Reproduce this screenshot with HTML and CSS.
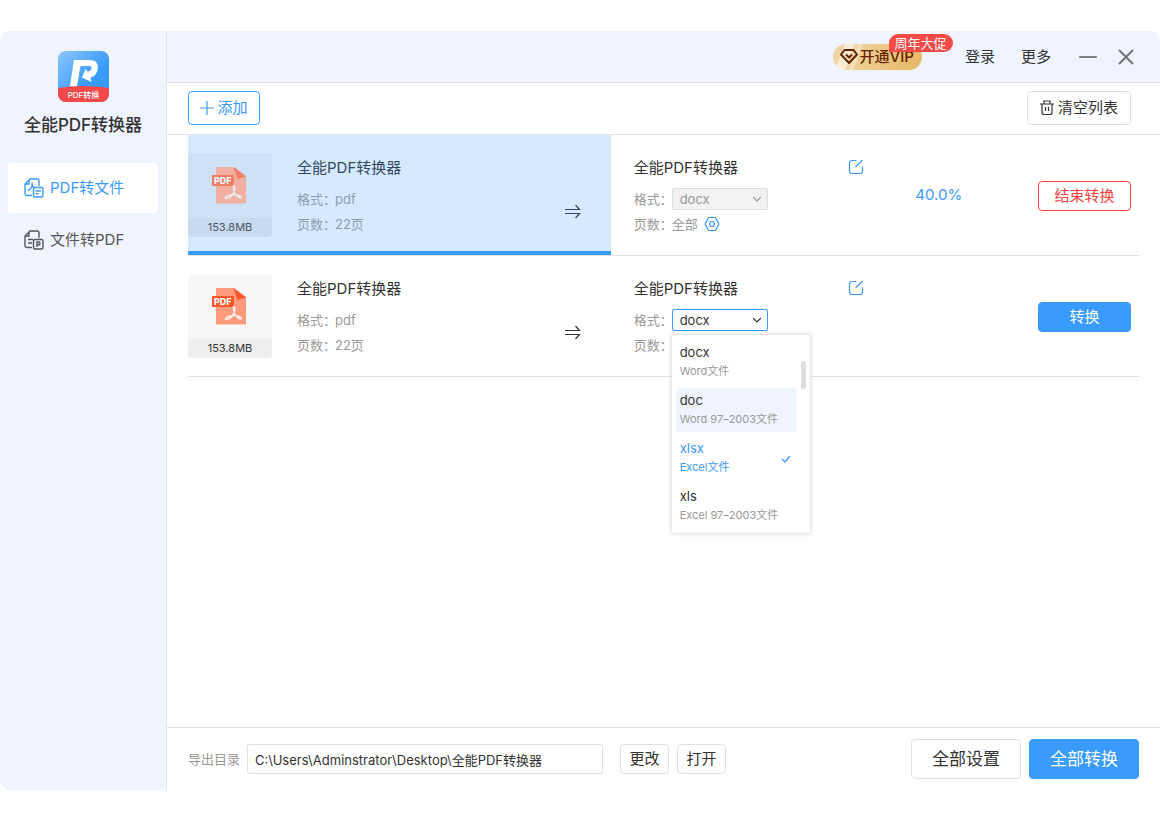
FILE: index.html
```html
<!DOCTYPE html>
<html lang="zh-CN">
<head>
<meta charset="utf-8">
<meta name="viewport" content="width=device-width, initial-scale=1">
<title>全能PDF转换器</title>
<link rel="stylesheet" href="styles.css">
</head>
<body>
<svg class="defs" aria-hidden="true">
  <symbol id="pdf-file" viewBox="0 0 37 37">
    <path d="M4 0H22L34 9V36.500H4Z" fill="#ff9a7c"/>
    <path d="M21.500 0L34 9.500L25.500 12Z" fill="#ff562a"/>
    <rect x="0" y="8" width="22" height="11" rx="0.500" fill="#ff562a"/>
    <path d="M22 18C23 20 23 23 21.500 26C20 29 17 31.500 14 31.500C12.500 31 14 29.500 16 28.800C20 27.300 25 27.300 28 29C30 30.200 29 31.500 27.500 30.800C23.500 29 21 24 21.500 18" fill="none" stroke="#f7efee" stroke-width="1.600" stroke-linejoin="round"/>
  </symbol>
  <symbol id="arrow" viewBox="0 0 17 16">
    <path d="M1 5.500H15.500L11.500 1M1 9.500H15.500L11.500 14" fill="none" stroke="currentColor" stroke-width="1.200"/>
  </symbol>
  <symbol id="edit" viewBox="0 0 16 16">
    <path d="M8.500 1.500H4A2.500 2.500 0 0 0 1.500 4V12A2.500 2.500 0 0 0 4 14.500H12A2.500 2.500 0 0 0 14.500 12V7.500M7.500 8L14.500 1" fill="none" stroke="currentColor" stroke-width="1.200"/>
  </symbol>
</svg>
<div class="window">
  <aside class="sidebar">
    <svg class="logo" viewBox="0 0 51 51" role="img" aria-label="PDF转换">
      <defs>
        <linearGradient id="logo-blue" x1="0" y1="0" x2="1" y2="1"><stop offset="0" stop-color="#8fc6ff"/><stop offset=".6" stop-color="#3a9bff"/></linearGradient>
        <clipPath id="logo-clip"><rect width="51" height="51" rx="8"/></clipPath>
      </defs>
      <g clip-path="url(#logo-clip)">
        <rect width="51" height="51" fill="url(#logo-blue)"/>
        <path d="M16 9H32C38 9 41 13 39.500 19C38.500 23.500 36 26 32.500 26.500L33.500 31L24 26.500L27.500 18L29.500 20.500C32 20.500 33.500 19 33.500 17C33.500 15.500 32.500 15 31 15H22.500L18.500 38H11.500L15 15Z" fill="#fff"/>
        <path d="M0 37Q25 33 51 37V51H0Z" fill="#f5484b"/>
      </g>
      <text x="25.500" y="47" text-anchor="middle" class="logo-text">PDF转换</text>
    </svg>
    <h1 class="app-name">全能PDF转换器</h1>
    <nav class="nav">
      <a class="nav-item is-active" href="#from-pdf">
        <svg width="20" height="20" viewBox="0 0 20 20" fill="none" stroke="currentColor" stroke-width="1.400" aria-hidden="true"><path d="M8 17.500H3A2 2 0 0 1 1 15.500V6L6 1H13A2 2 0 0 1 15 3V8M1.500 6H5V2M8 4.500C9 8 6.500 12 3.500 12.500M8 6C8 8 9.500 9.500 11 10"/><rect x="9.500" y="9.500" width="9.500" height="9.500" rx="1.500"/><path d="M11.500 13H17M11.500 15.800H14.500"/></svg>
        <span>PDF转文件</span>
      </a>
      <a class="nav-item" href="#to-pdf">
        <svg width="20" height="20" viewBox="0 0 20 20" fill="none" stroke="currentColor" stroke-width="1.400" aria-hidden="true"><path d="M8 17.500H3A2 2 0 0 1 1 15.500V6L6 1H13A2 2 0 0 1 15 3V8M1.500 6H5V2M4 9.500H9M4 13H8"/><rect x="9.500" y="9.500" width="9.500" height="9.500" rx="1.500"/><path d="M13 17V12H14.500A1.500 1.500 0 0 1 14.500 15H13"/></svg>
        <span>文件转PDF</span>
      </a>
    </nav>
  </aside>

  <main class="main">
    <header class="topbar">
      <button class="vip" type="button">
        <svg width="18" height="15" viewBox="0 0 18 15" fill="none" stroke="currentColor" stroke-width="2" stroke-linejoin="round" aria-hidden="true"><path d="M4.500 1H13.500L17 5.500L9 14L1 5.500Z"/><path d="M6 5.500L9 8.500L12 5.500"/></svg>
        <span>开通VIP</span>
        <span class="badge">周年大促</span>
      </button>
      <button class="link" type="button">登录</button>
      <button class="link" type="button">更多</button>
      <button class="win-btn" type="button" aria-label="最小化"><svg width="18" height="16" viewBox="0 0 18 16" aria-hidden="true"><path d="M1 8H17" stroke="#808080" stroke-width="2" stroke-linecap="round"/></svg></button>
      <button class="win-btn" type="button" aria-label="关闭"><svg width="16" height="16" viewBox="0 0 16 16" aria-hidden="true"><path d="M1.500 1.500L14.500 14.500M14.500 1.500L1.500 14.500" stroke="#757575" stroke-width="2" stroke-linecap="round"/></svg></button>
    </header>

    <div class="toolbar">
      <button class="btn btn-add" type="button">
        <svg width="14" height="14" viewBox="0 0 14 14" aria-hidden="true"><path d="M7 0V14M0 7H14" stroke="currentColor" stroke-width="1.200"/></svg>
        添加
      </button>
      <button class="btn btn-clear" type="button">
        <svg width="14" height="16" viewBox="0 0 14 16" fill="none" stroke="currentColor" stroke-width="1.200" aria-hidden="true"><path d="M0 4H14M4 4V1H10V4M2 4V12.500A2 2 0 0 0 4 14.500H10A2 2 0 0 0 12 12.500V4M5.500 7V11M8.500 7V11"/></svg>
        清空列表
      </button>
    </div>

    <section class="files">
      <article class="file is-running">
        <div class="source">
          <div class="thumb"><svg width="37" height="37" aria-hidden="true"><use href="#pdf-file"/><text x="2" y="17" class="pdf-tag">PDF</text></svg><span class="size">153.8MB</span></div>
          <div class="info">
            <h2 class="title">全能PDF转换器</h2>
            <p class="line format"><span class="key">格式：</span>pdf</p>
            <p class="line"><span class="key">页数：</span>22页</p>
          </div>
          <svg class="arrow" width="17" height="16" aria-hidden="true"><use href="#arrow"/></svg>
        </div>
        <div class="target">
          <div class="info">
            <div class="title-row"><h2 class="title">全能PDF转换器</h2><button class="icon-btn" type="button" aria-label="重命名"><svg width="16" height="16" aria-hidden="true"><use href="#edit"/></svg></button></div>
            <div class="line format"><label class="key" for="format-1">格式：</label><span class="picker"><select id="format-1" class="select" disabled><option>docx</option></select><svg class="chevron" width="8" height="6" viewBox="0 0 8 6" aria-hidden="true"><path d="M0 1L4 5L8 1" fill="none" stroke="currentColor" stroke-width="1.200"/></svg></span></div>
            <div class="line"><span class="key">页数：</span>全部<button class="icon-btn range" type="button" aria-label="页数设置"><svg width="16" height="16" viewBox="0 0 16 16" fill="none" stroke="currentColor" stroke-width="1.200" aria-hidden="true"><path d="M4.500 1.500H11.500L15 8L11.500 14.500H4.500L1 8Z" stroke-linejoin="round"/><circle cx="8" cy="8" r="2.500"/></svg></button></div>
          </div>
          <span class="percent">40.0%</span>
          <button class="btn btn-row btn-stop" type="button">结束转换</button>
        </div>
      </article>

      <article class="file">
        <div class="source">
          <div class="thumb"><svg width="37" height="37" aria-hidden="true"><use href="#pdf-file"/><text x="2" y="17" class="pdf-tag">PDF</text></svg><span class="size">153.8MB</span></div>
          <div class="info">
            <h2 class="title">全能PDF转换器</h2>
            <p class="line format"><span class="key">格式：</span>pdf</p>
            <p class="line"><span class="key">页数：</span>22页</p>
          </div>
          <svg class="arrow" width="17" height="16" aria-hidden="true"><use href="#arrow"/></svg>
        </div>
        <div class="target">
          <div class="info">
            <div class="title-row"><h2 class="title">全能PDF转换器</h2><button class="icon-btn" type="button" aria-label="重命名"><svg width="16" height="16" aria-hidden="true"><use href="#edit"/></svg></button></div>
            <div class="line format"><label class="key" for="format-2">格式：</label><span class="picker is-open"><select id="format-2" class="select"><option>docx</option><option>doc</option><option>xlsx</option><option>xls</option></select><svg class="chevron" width="8" height="6" viewBox="0 0 8 6" aria-hidden="true"><path d="M0 1L4 5L8 1" fill="none" stroke="currentColor" stroke-width="1.200"/></svg>
              <span class="menu" role="listbox" aria-label="格式">
                <button class="option" type="button" role="option"><span class="ext">docx</span><span class="desc">Word文件</span></button>
                <button class="option is-hover" type="button" role="option"><span class="ext">doc</span><span class="desc">Word 97–2003文件</span></button>
                <button class="option is-selected" type="button" role="option" aria-selected="true"><span class="ext">xlsx</span><span class="desc">Excel文件</span><svg class="check" width="10" height="8" viewBox="0 0 10 8" aria-hidden="true"><path d="M1 4L4 7L9 1" fill="none" stroke="currentColor" stroke-width="1.200"/></svg></button>
                <button class="option" type="button" role="option"><span class="ext">xls</span><span class="desc">Excel 97–2003文件</span></button>
                <span class="scrollbar"></span>
              </span></span></div>
            <div class="line"><span class="key">页数：</span></div>
          </div>
          <span class="percent"></span>
          <button class="btn btn-row btn-primary" type="button">转换</button>
        </div>
      </article>
    </section>

    <footer class="footer">
      <label class="out-label" for="out-dir">导出目录</label>
      <input class="path" id="out-dir" type="text" value="C:\Users\Adminstrator\Desktop\全能PDF转换器">
      <button class="btn btn-small" type="button">更改</button>
      <button class="btn btn-small" type="button">打开</button>
      <div class="actions">
        <button class="btn btn-large" type="button">全部设置</button>
        <button class="btn btn-large btn-primary" type="button">全部转换</button>
      </div>
    </footer>
  </main>
</div>
</body>
</html>
```
FILE: styles.css
```css
:root {
  --blue: #3a9bff;
  --tint: #f0f4ff;
  --line: #e2e2e2;
  --text: #333;
  --muted: #999;
}
* { box-sizing: border-box; }
body {
  margin: 0;
  background: #fff;
  color: var(--text);
  font: 15px/22px Inter, "Noto Sans CJK SC", sans-serif;
}
h1, h2, p { margin: 0; font-size: inherit; font-weight: 400; }
button, input, select { font: inherit; color: inherit; }
button { padding: 0; border: 0; background: none; cursor: pointer; }
svg { display: block; flex: none; }
.defs { position: absolute; width: 0; height: 0; }

.window {
  display: grid;
  grid-template-columns: 166px minmax(0, 1fr);
  min-height: 100vh;
  border: solid #fff;
  border-width: 31px 0;
}

.sidebar { padding: 20px 8px; background: var(--tint); border-radius: 10px 0 0 10px; }
.logo { width: 51px; height: 51px; margin: 0 auto; }
.logo-text { font-size: 8px; font-weight: 500; fill: #fff; }
.app-name { margin-top: 12px; font-size: 17px; font-weight: 500; text-align: center; white-space: nowrap; }
.nav { display: grid; gap: 2px; margin-top: 27px; }
.nav-item {
  display: flex;
  align-items: center;
  gap: 6px;
  height: 50px;
  padding: 0 16px;
  border-radius: 4px;
  color: #555;
  text-decoration: none;
}
.nav-item.is-active { background: #fff; color: var(--blue); }

.main { display: flex; flex-direction: column; min-width: 0; border-left: 1px solid var(--line); }
.topbar {
  display: flex;
  align-items: center;
  justify-content: flex-end;
  height: 52px;
  padding-right: 26px;
  background: var(--tint);
  border-bottom: 1px solid var(--line);
  border-top-right-radius: 10px;
}
.vip {
  position: relative;
  display: flex;
  align-items: center;
  gap: 2px;
  height: 26px;
  margin-right: 43px;
  padding: 0 8px 0 7px;
  border-radius: 13px;
  background: linear-gradient(110deg, #f2d5a6 12%, #faecd6 12% 22%, #f2d5a6 22% 26%, #f7e2c0 26% 30%, #f0cf98 30%, #e8b662);
  color: #632400;
  font-weight: 500;
}
.badge {
  position: absolute;
  top: -10px;
  left: 56px;
  padding: 0 6px;
  border-radius: 9px 9px 9px 0;
  background: #f54a45;
  color: #fff;
  font-size: 13px;
  font-weight: 400;
  line-height: 18px;
  white-space: nowrap;
}
.link { margin-right: 26px; }
.link + .win-btn { margin-left: 2px; }
.win-btn + .win-btn { margin-left: 21px; }

.toolbar {
  display: flex;
  align-items: center;
  justify-content: space-between;
  height: 52px;
  padding: 0 29px 1px 21px;
  border-bottom: 1px solid var(--line);
}
.btn {
  display: flex;
  align-items: center;
  justify-content: center;
  border: 1px solid var(--line);
  border-radius: 4px;
  background: #fff;
  white-space: nowrap;
}
.btn-add { gap: 3px; width: 72px; height: 34px; border-color: var(--blue); color: var(--blue); }
.btn-clear { gap: 4px; width: 104px; height: 34px; }
.btn-row { width: 93px; height: 30px; margin: 46px 8px 0 0; }
.btn-stop { border-color: #ff4242; color: #ff4242; }
.btn-small { width: 49px; height: 30px; margin-right: 8px; }
.btn-large { width: 110px; height: 40px; font-size: 17px; }
.btn-primary { background: var(--blue); border-color: var(--blue); color: #fff; }

.files { flex: 1; padding: 0 21px; }
.file {
  display: grid;
  grid-template-columns: minmax(0, 4fr) minmax(0, 5fr);
  height: 121px;
  border-bottom: 1px solid var(--line);
}
.source { display: flex; border-bottom: 4px solid transparent; }
.is-running .source { background: #d6eaff; border-color: var(--blue); }
.thumb {
  display: flex;
  flex: none;
  flex-direction: column;
  align-items: center;
  justify-content: space-between;
  width: 84px;
  height: 84px;
  margin: 18px 25px 0 0;
  padding-top: 14px;
  overflow: hidden;
  border-radius: 4px;
  background: #f7f7f7;
}
.size { align-self: stretch; background: #eee; font-size: 11px; line-height: 19px; text-align: center; }
.pdf-tag { font-size: 9px; font-weight: 800; fill: #fff; }
.is-running .thumb { background: #cee2f6; }
.is-running .thumb svg { opacity: .7; }
.is-running .size { background: #c8dbee; color: #4a5866; }
.is-running .source .title { color: #34495e; }
.is-running .source .line { color: #8c9eb1; }
.is-running .arrow { color: #34495e; }
.info { padding-top: 22px; }
.line { display: flex; align-items: center; height: 18px; margin-top: 5px; color: var(--muted); font-size: 13px; line-height: 18px; white-space: nowrap; }
.format { height: 22px; margin-top: 9px; }
.key { flex: none; width: 38px; }
.arrow { margin: 69px 30px 0 auto; }

.target { display: grid; grid-template-columns: 230px 150px 1fr; padding-left: 23px; }
.title-row { display: flex; align-items: flex-start; justify-content: space-between; }
.icon-btn { color: var(--blue); }
.title-row .icon-btn { padding-top: 2px; }
.range { margin-left: 6px; }
.percent { margin-top: 49px; color: var(--blue); text-align: center; }
.target .btn-row { justify-self: end; }

.picker { position: relative; display: block; width: 96px; color: #999; }
.picker.is-open { color: var(--text); }
.select {
  display: block;
  width: 100%;
  height: 22px;
  padding: 0 7px;
  border: 1px solid #ddd;
  border-radius: 2px;
  background: #f2f2f2;
  color: inherit;
  font-size: 13px;
  opacity: 1;
  appearance: none;
}
.is-open .select { border-color: var(--blue); background: #fff; }
.chevron { position: absolute; top: 8px; right: 7px; }
.menu {
  position: absolute;
  z-index: 1;
  top: 25px;
  left: -1px;
  display: grid;
  gap: 4px;
  width: 140px;
  padding: 5px 13px 5px 4px;
  border: 1px solid #e8e8e8;
  border-radius: 3px;
  background: #fff;
  box-shadow: 0 0 4px rgba(0, 0, 0, .14);
}
.option { position: relative; height: 44px; padding: 3px 4px; border-radius: 4px; text-align: left; line-height: 19px; }
.ext, .desc { display: block; }
.desc { color: var(--muted); font-size: 11px; }
.is-hover { background: var(--tint); }
.is-selected, .is-selected .desc { color: var(--blue); }
.check { position: absolute; top: 19px; right: 6px; }
.scrollbar { position: absolute; top: 26px; right: 4px; width: 5px; height: 28px; border-radius: 3px; background: #ddd; }

.footer { display: flex; align-items: center; height: 63px; padding: 0 21px; border-top: 1px solid var(--line); }
.out-label { margin-right: 7px; color: var(--muted); font-size: 13px; white-space: nowrap; }
.path {
  flex: 0 1 356px;
  min-width: 0;
  height: 30px;
  margin-right: 17px;
  padding: 0 7px;
  border: 1px solid var(--line);
  border-radius: 2px;
  font-size: 13px;
}
.actions { display: flex; gap: 8px; margin-left: auto; }
```
